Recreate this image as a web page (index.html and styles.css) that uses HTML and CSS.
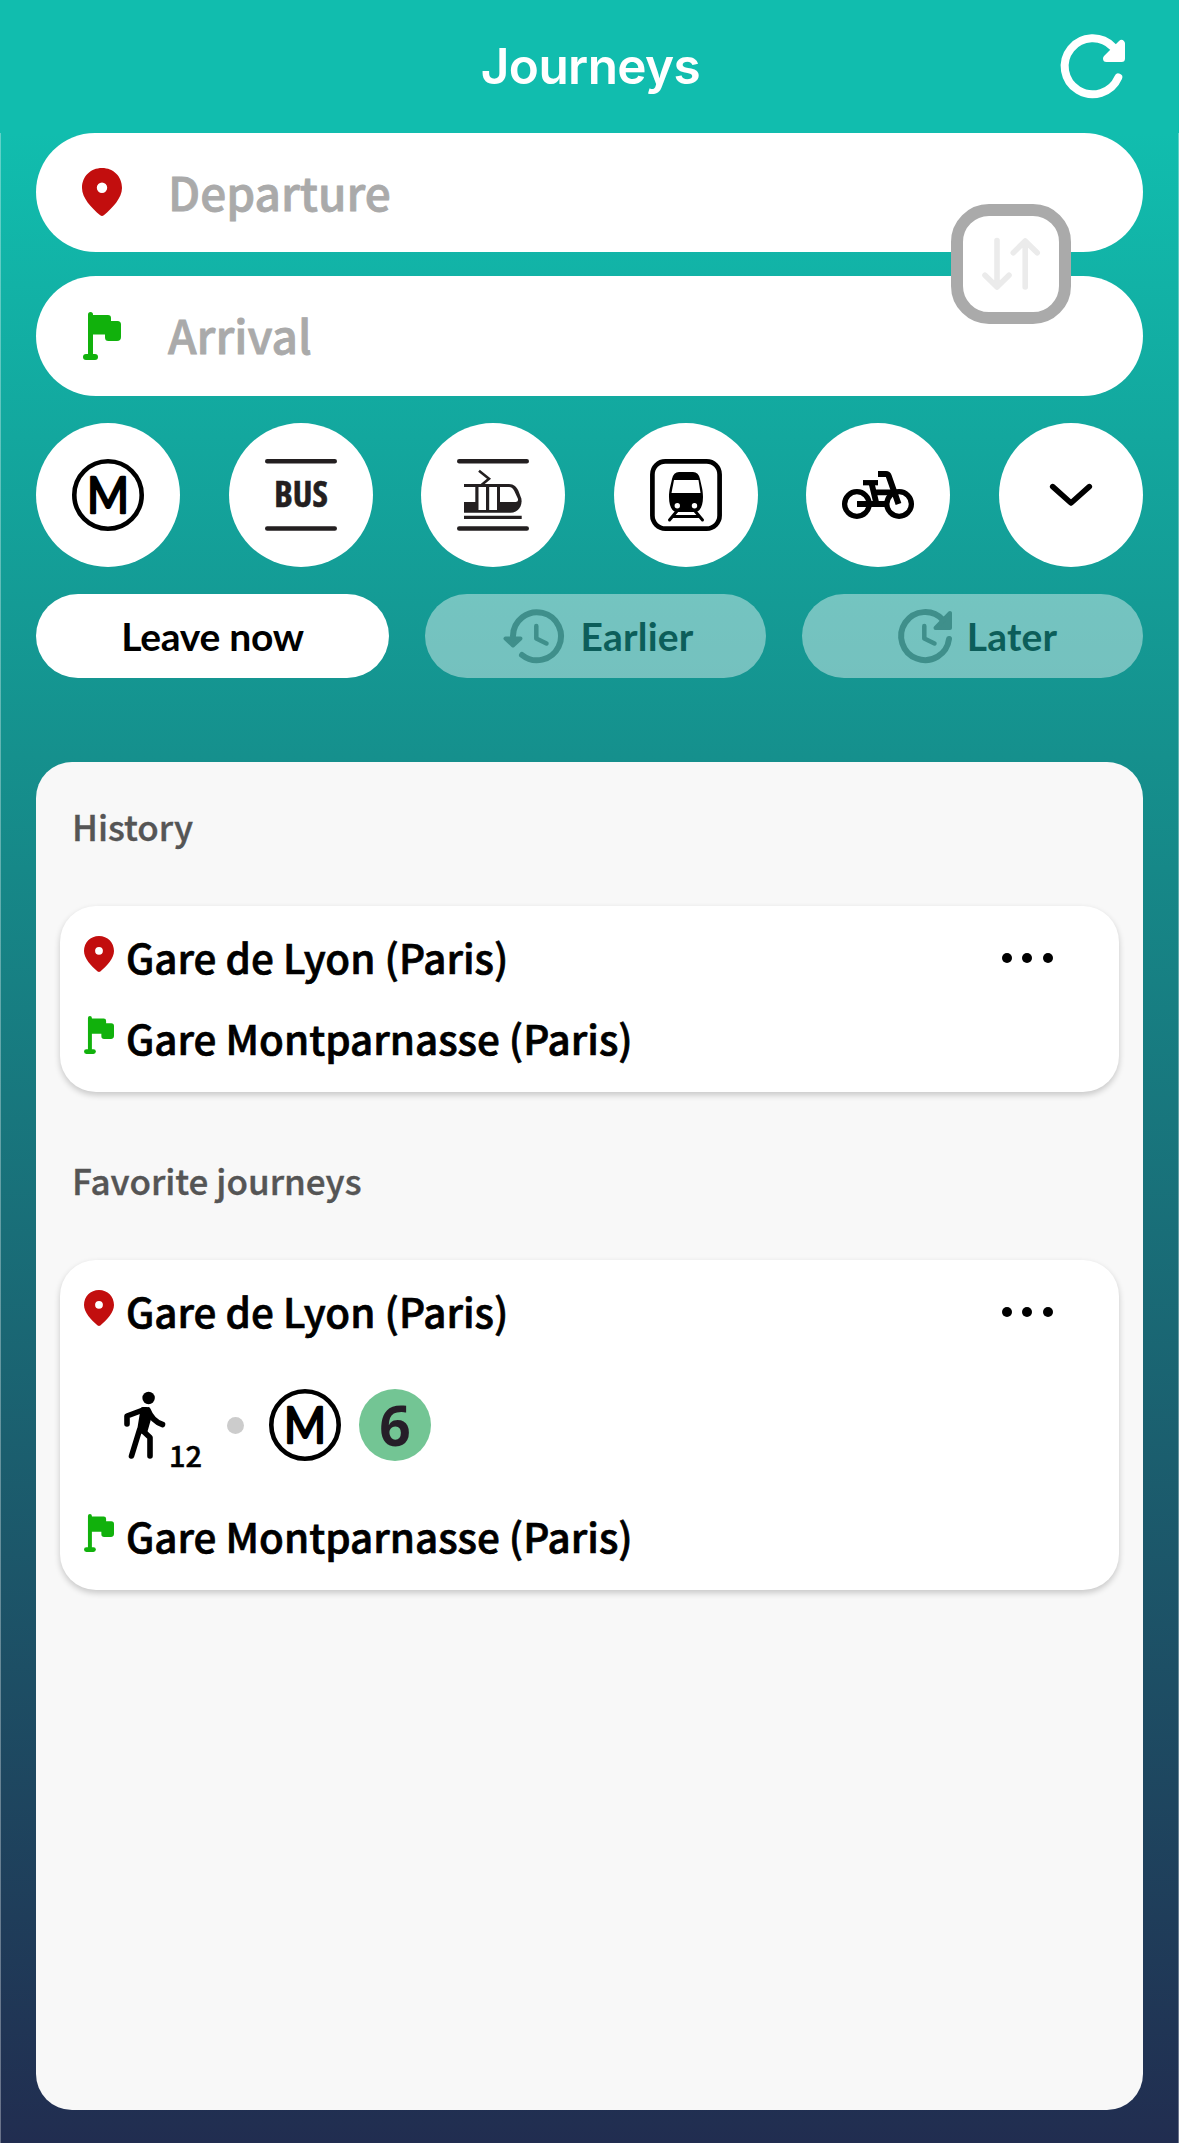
FILE: index.html
```html
<!DOCTYPE html>
<html lang="en">
<head>
<meta charset="utf-8">
<title>Journeys</title>
<link rel="stylesheet" href="styles.css">
</head>
<body>
<svg class="defs" width="0" height="0" aria-hidden="true">
  <symbol id="pin" viewBox="0 0 40 48">
    <path fill="#c20e0e" fill-rule="evenodd" d="M20 0C31.500 0 40 8.500 40 20C40 30 30.500 40 21.800 47.300Q20 48.600 18.200 47.300C9.500 40 0 30 0 20C0 8.500 8.500 0 20 0ZM20 14.500a5.200 5.200 0 1 0 0 10.400a5.200 5.200 0 0 0 0-10.400Z"/>
  </symbol>
  <symbol id="flag" viewBox="0 0 38 48">
    <g fill="#11b10c"><rect x="5" width="5" height="46" rx="2.500"/><rect y="42" width="15" height="6" rx="3"/><path d="M7 3H25Q28 3 28 6V9H34.500Q38 9 38 12.500V25Q38 29 34 29H25.500Q22 29 22 25.500V22.500H7Z"/></g>
  </symbol>
</svg>
<header class="header">
  <h1>Journeys</h1>
  <svg class="refresh" width="66" height="66" viewBox="1060 33 66 66" fill="none" stroke="#fff" stroke-width="8" stroke-linecap="round" stroke-linejoin="round">
    <path d="M1118.300 77.500A28 28 0 1 1 1113 47"/><path fill="#fff" stroke-width="7" d="M1121.500 43.500V58.500H1106.500Z"/>
  </svg>
</header>
<main class="main">
  <section class="fields">
    <div class="field"><svg class="field-pin"><use href="#pin"/></svg><span>Departure</span></div>
    <div class="field"><svg class="field-flag"><use href="#flag"/></svg><span>Arrival</span></div>
    <button class="swap" aria-label="Swap">
      <svg width="60" height="60" viewBox="981 234 60 60" fill="none" stroke="#ebebeb" stroke-width="5.600" stroke-linecap="round" stroke-linejoin="round"><path d="M997 240.500V287M985 275.300L997 287L1009 275.300M1025.200 287V241M1013.300 252.700L1025.200 241L1037.200 252.700"/></svg>
    </button>
  </section>
  <nav class="modes">
    <button class="mode" aria-label="Metro"><svg class="metro" viewBox="0 0 72 72"><circle cx="36" cy="36" r="33.700" fill="none" stroke="#000" stroke-width="4.600"/><text class="metro-letter" x="15" y="53.500" textLength="42" lengthAdjust="spacingAndGlyphs">M</text></svg></button>
    <button class="mode" aria-label="Bus"><svg viewBox="0 0 72 72"><path d="M2.200 2.200H69.800M2.200 69.500H69.800" stroke="#231f20" stroke-width="4.400" stroke-linecap="round"/><text class="bus" x="36" y="48" text-anchor="middle">BUS</text></svg></button>
    <button class="mode" aria-label="Tram"><svg viewBox="0 0 72 72">
      <path d="M2.200 2.200H69.800M2.200 69.500H69.800" stroke="#231f20" stroke-width="4.400" stroke-linecap="round"/>
      <path d="M22 11.700L32 19.700L24.500 26" fill="none" stroke="#231f20" stroke-width="2.600"/>
      <path fill="#231f20" d="M7 25H52C57 25 59.500 28 61.500 32L64.300 39.500C66 48 60 53.800 53.500 53.800H7Z"/>
      <path fill="#fff" d="M7 28H18.300V43H7ZM21.500 28H29V51H21.500ZM32.200 28H40V51H32.200ZM43 28H52C54.500 28 56 29.500 57.200 31.800L60.800 39.500Q61.800 43 58.500 43H43Z"/>
      <path fill="#231f20" d="M7 56.700H64.700V60H7Z"/></svg></button>
    <button class="mode" aria-label="Train"><svg viewBox="0 0 72 72">
      <rect x="2.400" y="2.400" width="67.200" height="67.200" rx="13" fill="none" stroke="#000" stroke-width="4.700"/>
      <path d="M29 13H43Q48.500 13 50 20C51.500 27 53 31 53 38C53 47 50 53 45 53H27C22 53 19 47 19 38C19 31 20.500 27 22 20Q23.500 13 29 13Z"/>
      <path fill="#fff" d="M24 21H48.500L50.500 34H21.500Z"/><circle cx="27.300" cy="46.700" r="2.700" fill="#fff"/><circle cx="44.500" cy="46.700" r="2.700" fill="#fff"/>
      <path d="M27 52L19.500 61M45 52L52.500 61M24 57.500H48" fill="none" stroke="#000" stroke-width="3" stroke-linecap="round"/></svg></button>
    <button class="mode" aria-label="Bike"><svg viewBox="0 0 72 72" fill="none" stroke="#000" stroke-width="5.300">
      <circle cx="14.900" cy="45" r="12.300"/><circle cx="57.100" cy="45" r="12.300"/>
      <path stroke-width="5.800" d="M15 45H44M29.500 24L34.500 45M32 33.300H53"/><path d="M21 23.700H36"/><path stroke-width="6" d="M36 15H44Q46 15 46.700 17L56.500 45"/></svg></button>
    <button class="mode" aria-label="More"><svg viewBox="0 0 72 72"><path d="M17.700 27.700L36 44L54.300 27.700" fill="none" stroke="#000" stroke-width="5.600" stroke-linecap="round" stroke-linejoin="round"/></svg></button>
  </nav>
  <div class="times">
    <button class="time now">Leave now</button>
    <button class="time shift earlier"><svg width="62" height="56" viewBox="506 608 62 56"><path class="line" d="M525 655A24 24 0 1 0 516 636"/><path class="arrow" d="M508.500 638.500H523.500L516 645.500Z"/><path class="hand" d="M539.300 626V638.500L549.500 643.500"/></svg><span>Earlier</span></button>
    <button class="time shift later"><svg width="56" height="56" viewBox="898 608 56 56"><path class="line" d="M950 639A24 24 0 1 1 944 620"/><path class="arrow" d="M951 613V628H936.500Z"/><path class="hand" d="M925.300 626V638.500L935.500 643.500"/></svg><span>Later</span></button>
  </div>
  <section class="panel">
    <h2>History</h2>
    <article class="card">
      <div class="stop"><svg class="pin"><use href="#pin"/></svg><span>Gare de Lyon (Paris)</span><i class="dots"><b></b><b></b><b></b></i></div>
      <div class="stop arrival"><svg class="flag"><use href="#flag"/></svg><span>Gare Montparnasse (Paris)</span></div>
    </article>
    <h2 class="second">Favorite journeys</h2>
    <article class="card">
      <div class="stop"><svg class="pin"><use href="#pin"/></svg><span>Gare de Lyon (Paris)</span><i class="dots"><b></b><b></b><b></b></i></div>
      <div class="route">
        <svg class="walk" width="46" height="72" viewBox="122 1389 46 72" fill="none" stroke="#000" stroke-width="5.600" stroke-linecap="round" stroke-linejoin="round"><circle cx="148.600" cy="1398" r="6.200" fill="#000" stroke="none"/><path d="M127 1424V1416L143 1410M148 1410C151 1418 155 1422 162.500 1424.500M139.500 1430L131.500 1456M142 1430L150 1437.500V1456"/><path fill="#000" stroke-width="5" d="M143 1409.500H146.500L149 1417L145 1431H139.500Z"/></svg>
        <span class="minutes">12</span>
        <i class="dot"></i>
        <svg class="metro" viewBox="0 0 72 72"><circle cx="36" cy="36" r="33.700" fill="none" stroke="#000" stroke-width="4.600"/><text class="metro-letter" x="15" y="53.500" textLength="42" lengthAdjust="spacingAndGlyphs">M</text></svg>
        <span class="line-number">6</span>
      </div>
      <div class="stop arrival"><svg class="flag"><use href="#flag"/></svg><span>Gare Montparnasse (Paris)</span></div>
    </article>
  </section>
</main>
</body>
</html>
```
FILE: styles.css
```css
* { box-sizing: border-box; }
body {
  margin: 0;
  height: 2143px;
  display: flex;
  flex-direction: column;
  background: #11bdae;
  font-family: "Noto Sans CJK SC", "Noto Sans", sans-serif;
  font-weight: 500;
  overflow: hidden;
}
.defs { position: absolute; }
svg { display: block; flex: none; overflow: visible; }
button { border: 0; padding: 0; font: inherit; color: #000; }
h1, h2 { margin: 0; }

.header {
  height: 133px;
  flex: none;
  display: grid;
  grid-template-columns: 1fr auto 1fr;
  align-items: center;
  padding: 0 53px 2px 55px;
}
h1 {
  grid-column: 2;
  font: 600 49.500px/60px Inter, sans-serif;
  letter-spacing: -.6px;
  color: #fff;
}
.refresh { justify-self: end; }

.main {
  flex: 1;
  display: flex;
  flex-direction: column;
  padding: 0 35px 33px;
  border: solid rgba(255, 255, 255, .33);
  border-width: 0 1px;
  background: linear-gradient(#11bdae, #15908d 31%, #212d50) border-box;
}
.fields {
  position: relative;
  display: flex;
  flex-direction: column;
  gap: 24px;
}
.field {
  height: 120px;
  border-radius: 60px;
  background: #fff;
  display: flex;
  align-items: center;
  color: #aaa;
  font-size: 46px;
  line-height: 60px;
}
.field:first-child { height: 119px; border-radius: 59px 59px 60px 60px; }
.field svg { margin-left: 46px; width: 40px; height: 48px; }
.field span { margin-left: 46px; padding-bottom: 4px; -webkit-text-stroke: .8px; }
.field .field-pin { margin-bottom: 2px; }
.field .field-flag { width: 38px; margin-left: 47px; }
.field-flag + span { padding-left: 1px; }
.swap {
  position: absolute;
  top: 71px;
  right: 72px;
  width: 120px;
  height: 120px;
  border: 12px solid #aaa;
  border-radius: 38px;
  background: #fff;
  display: grid;
  place-items: center;
}
.modes { display: flex; justify-content: space-between; margin-top: 27px; }
.mode {
  width: 144px;
  height: 144px;
  border-radius: 50%;
  background: #fff;
  display: grid;
  place-items: center;
}
.mode svg { width: 72px; height: 72px; }
.metro-letter { font: 400 50px Lato, sans-serif; stroke: #000; stroke-width: 2.400px; stroke-linejoin: round; }
.bus { font: 700 35px "Open Sans", sans-serif; font-stretch: 75%; fill: #231f20; stroke: #231f20; stroke-width: .6px; }

.times {
  display: grid;
  grid-template-columns: 353px 341px 341px;
  justify-content: space-between;
  margin-top: 27px;
}
.time {
  height: 84px;
  border-radius: 42px;
  background: #fff;
  font: 700 39px/48px Lato, sans-serif;
  display: flex;
  align-items: center;
  justify-content: center;
}
.now { letter-spacing: -.3px; }
.shift { background: rgba(255, 255, 255, .41); color: #0c5e5a; gap: 15px; letter-spacing: .2px; }
.earlier { padding-left: 6px; }
.later { padding-left: 9px; gap: 14px; }
.line, .hand { fill: none; stroke: #3f8f8b; stroke-width: 6; stroke-linecap: round; }
.hand { stroke-width: 4.500; stroke-linejoin: round; }
.arrow { fill: #3f8f8b; stroke: #3f8f8b; stroke-width: 4; stroke-linejoin: round; }

.panel {
  flex: 1;
  margin-top: 84px;
  padding: 36px 24px 0;
  border-radius: 36px;
  background: #f8f8f8;
}
h2 {
  margin-left: 12px;
  height: 108px;
  font-size: 35px;
  font-weight: 500;
  line-height: 56px;
  color: #555;
  -webkit-text-stroke: .4px;
}
h2.second { margin-top: 60px; }
.card {
  border-radius: 36px;
  background: #fff;
  padding: 22px 24px 0;
  height: 186px;
  box-shadow: 0 3px 6px rgba(0, 0, 0, .2);
}
.second + .card { height: 330px; }
.stop {
  display: flex;
  align-items: flex-start;
  height: 60px;
  font-size: 40.400px;
  line-height: 57px;
}
.stop span { margin-left: 12px; -webkit-text-stroke: .7px; }
.pin { width: 30px; height: 36px; margin-top: 8px; }
.arrival { margin-top: 21px; }
.flag { width: 30px; height: 38px; margin-top: 7px; }
.dots { display: flex; gap: 10.700px; margin: 25px 42px 0 auto; }
.dots b { width: 10px; height: 10px; border-radius: 50%; background: #000; }
.route { display: flex; height: 72px; margin: 47px 0 0 38px; }
.route + .arrival { margin-top: 46px; }
.minutes { font-size: 29px; line-height: 40px; margin: 45px 0 0 1px; width: 36px; -webkit-text-stroke: .5px; }
.dot { width: 17px; height: 17px; margin: 28px 25px 0 22px; border-radius: 50%; background: #ccc; }
.metro { width: 72px; height: 72px; }
.line-number {
  width: 72px;
  height: 72px;
  margin-left: 18px;
  border-radius: 50%;
  background: #73c594;
  color: #261e28;
  font: 700 55px/72px "Open Sans", sans-serif;
  text-align: center;
}
```
